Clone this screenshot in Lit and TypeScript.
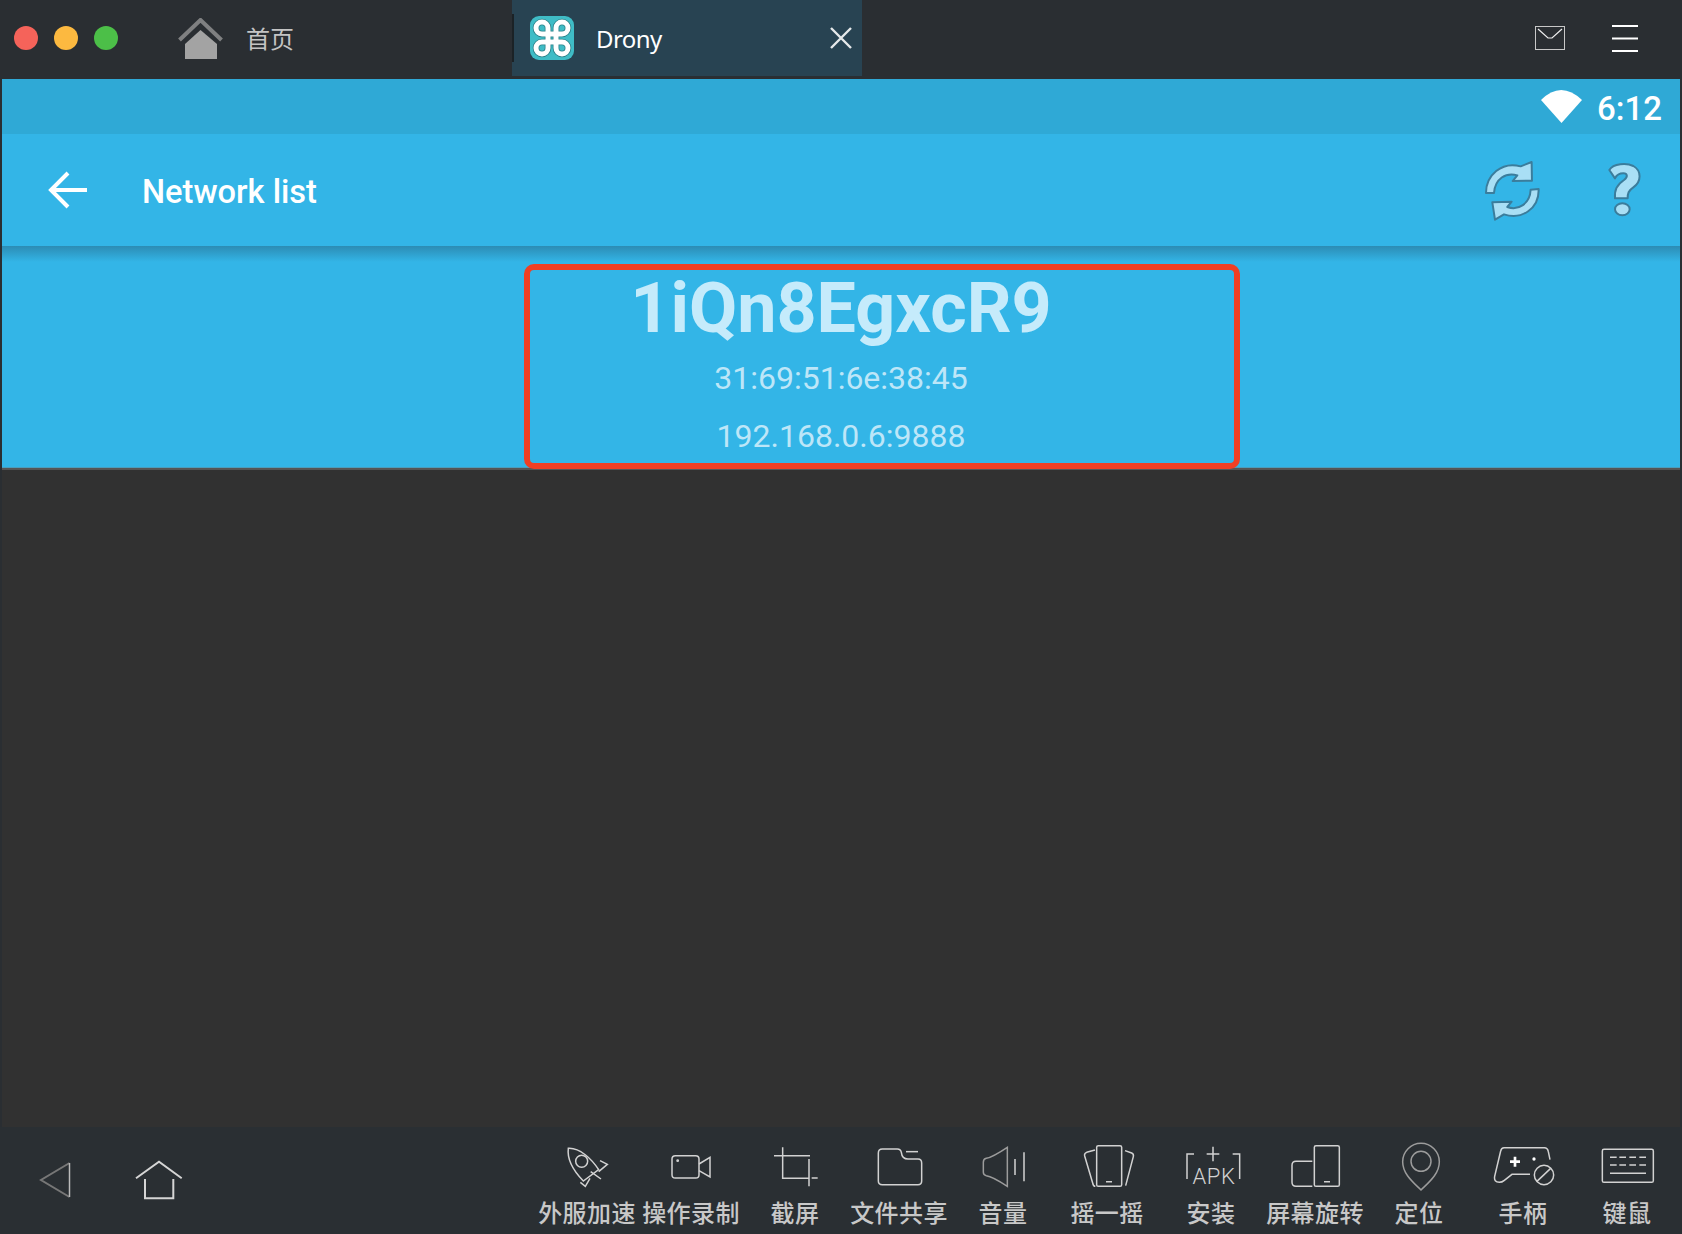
import { LitElement, html, svg, css } from 'lit';
import { customElement } from 'lit/decorators.js';

const CJK = `"Noto Sans CJK SC", "Noto Sans", sans-serif`;

// viewBoxes are 192x180 so each toolbar icon draws at 1/3 scale
const TOOLS = [
  {
    label: '外服加速',
    box: '105 24 192 180',
    icon: svg`
      <path d="M145 58 C180 56 215 90 236 122 L190 156 C165 130 140 95 145 58 Z" />
      <circle cx="185" cy="97" r="18" />
      <path d="M240 95 L262 106 L236 128 M181 160 L196 172 L210 148 M212 128 L243 150" />`,
  },
  {
    label: '操作录制',
    box: '420 24 192 180',
    icon: svg`
      <rect x="459" y="80" width="81" height="67" rx="10" />
      <path d="M540 105 L573 85 V144 L540 125" />
      <circle cx="476" cy="95" r="2" />`,
  },
  {
    label: '截屏',
    box: '729 24 192 180',
    icon: svg`
      <path d="M762 80 H870 M788 55 V148 H865 M867 90 V172 M875 147 H893" />`,
  },
  {
    label: '文件共享',
    box: '1041 24 192 180',
    icon: svg`
      <path d="M1075 72 Q1075 60 1087 60 H1132 Q1142 60 1144 70 Q1146 90 1164 90 H1194 Q1205 90 1205 102 V156 Q1205 167 1194 167 H1087 Q1075 167 1075 156 Z" />
      <path d="M1158 68 H1194" />`,
  },
  {
    label: '音量',
    box: '96 24 192 180',
    icon: svg`
      <path class="dim" d="M133 100 Q133 90 142 88 Q160 85 205 55 V172 Q160 142 142 140 Q133 138 133 130 Z" />
      <path d="M228 90 V138 M255 70 V157" />`,
  },
  {
    label: '摇一摇',
    box: '405 24 192 180',
    icon: svg`
      <rect x="470" y="50" width="75" height="122" rx="5" />
      <path d="M498 158 H516 M465 63 L440 70 Q432 73 434 81 L458 162 Q460 172 466 172 M555 65 L575 72 Q582 75 580 83 L557 170" />`,
  },
  {
    label: '安装',
    box: '717 24 192 180',
    icon: svg`
      <path d="M762 75 H741 V150 M878 75 H899 V150 M800 75 H838 M819 53 V97" />
      <text x="822" y="166" text-anchor="middle" class="apk">APK</text>`,
  },
  {
    label: '屏幕旋转',
    box: '-51 24 192 180',
    icon: svg`
      <rect x="43" y="50" width="75" height="122" rx="5" />
      <path d="M72 158 H90 M37 97 H-12 Q-24 97 -24 109 V160 Q-24 172 -12 172 H37" />`,
  },
  {
    label: '定位',
    box: '261 24 192 180',
    icon: svg`
      <path class="dim" d="M363 183 C340 160 308 135 308 98 A55 55 0 0 1 418 98 C418 135 386 160 363 183 Z" />
      <circle class="dim" cx="363" cy="97" r="30" />`,
  },
  {
    label: '手柄',
    box: '573 24 192 180',
    icon: svg`
      <path d="M750 92 L745 68 Q743 56 733 56 H612 Q604 56 602 66 L584 142 Q581 160 598 160 Q606 160 613 154 L636 136 H690" />
      <path d="M630 98 H660 M645 83 V113" class="bold" />
      <circle cx="702" cy="90" r="5" class="solid" />
      <circle cx="732" cy="138" r="29" />
      <path d="M710 158 L752 118" />`,
  },
  {
    label: '键鼠',
    box: '885 24 192 180',
    icon: svg`
      <rect x="907" y="61" width="153" height="99" rx="5" />
      <path d="M930 85 H950 M958 85 H978 M988 85 H1008 M1018 85 H1038 M930 108 H950 M958 108 H978 M988 108 H1008 M1018 108 H1038 M930 133 H1038" />`,
  },
];

@customElement('app-root')
export class AppRoot extends LitElement {
  static styles = css`
    :host {
      display: flex;
      flex-direction: column;
      height: 1234px;
      background: #2a2e32;
      font-family: Roboto, sans-serif;
      overflow: hidden;
    }
    .titlebar {
      display: flex;
      height: 79px;
      flex: none;
    }
    .home-tab {
      display: flex;
      align-items: center;
      width: 512px;
      height: 76px;
      padding-left: 14px;
      box-sizing: border-box;
    }
    .lights {
      display: flex;
      gap: 16px;
      margin-right: 60px;
    }
    .light {
      width: 24px;
      height: 24px;
      border-radius: 50%;
    }
    .home-label {
      margin: -2px 0 0 23px;
      font: 24px ${css([CJK] as unknown as TemplateStringsArray)};
      color: #c4c4c4;
    }
    .tab {
      display: flex;
      align-items: center;
      width: 350px;
      height: 76px;
      background: #284352;
    }
    .tab-sep {
      width: 2px;
      height: 48px;
      background: #1b2226;
    }
    .tab-icon {
      margin-left: 16px;
    }
    .tab-name {
      margin-left: 22px;
      font: 24px "Noto Sans", sans-serif;
      letter-spacing: -0.6px;
      color: #fff;
    }
    .tab-close {
      margin-left: auto;
      margin-right: 8px;
    }
    .win-actions {
      display: flex;
      align-items: center;
      gap: 47px;
      height: 76px;
      margin-left: auto;
      padding-right: 44px;
    }
    .android {
      flex: 1;
      display: flex;
      flex-direction: column;
      margin: 0 2px;
      background: #313131;
    }
    .status {
      flex: none;
      height: 55px;
      display: flex;
      align-items: center;
      justify-content: flex-end;
      gap: 15px;
      padding-right: 18px;
      background: #2fa9d6;
      color: #fff;
      font-size: 33px;
      font-weight: 500;
    }
    .status span {
      margin-top: 3px;
    }
    .toolbar {
      flex: none;
      height: 112px;
      display: flex;
      align-items: center;
      padding: 0 35px 0 44px;
      background: #33b5e7;
    }
    .toolbar h1 {
      margin: 4px 0 0 52px;
      font-size: 32.6px;
      font-weight: 500;
      color: #fff;
    }
    .refresh {
      margin-left: auto;
      margin-right: 62px;
    }
    .refresh path,
    .help path,
    .help ellipse {
      fill: #a9dff5;
      stroke: #3b7d9c;
      stroke-width: 6;
      stroke-linejoin: round;
    }
    .list {
      position: relative;
      flex: none;
      height: 221px;
      box-sizing: border-box;
      padding-top: 22px;
      text-align: center;
      color: #bde6f8;
      background: linear-gradient(#2c8cb4, #33b5e7 16px);
    }
    .net-name {
      margin-bottom: 1px;
      font-size: 70px;
      font-weight: 700;
      line-height: 80px;
      color: #c5ebfb;
    }
    .net-line {
      font-size: 32px;
      line-height: 58px;
    }
    .mark {
      position: absolute;
      left: 522px;
      top: 18px;
      width: 716px;
      height: 205px;
      box-sizing: border-box;
      border: 6px solid #f03f23;
      border-radius: 10px;
    }
    .divider {
      flex: none;
      height: 3px;
      background: linear-gradient(#4a9dbd 1px, #555 1px);
    }
    .navbar {
      flex: none;
      height: 107px;
      display: flex;
      padding: 0 3px 0 38px;
      background: #2a2f33;
    }
    .nav {
      display: flex;
      align-self: center;
      gap: 59px;
      margin-top: -2px;
    }
    .tools {
      display: grid;
      grid-template-columns: repeat(11, 104px);
      margin-left: auto;
      padding-top: 10px;
    }
    .tool {
      display: flex;
      flex-direction: column;
      align-items: center;
    }
    .tool svg {
      width: 64px;
      height: 60px;
      fill: none;
      stroke: #d2d2d2;
      stroke-width: 4.5;
    }
    .tool svg .dim {
      stroke: #9c9c9c;
    }
    .tool svg .apk {
      font: 300 66px Roboto, sans-serif;
      letter-spacing: 2px;
      fill: #d2d2d2;
      stroke: none;
    }
    .tool svg .bold {
      stroke: #fff;
      stroke-width: 8;
    }
    .tool svg .solid {
      fill: #fff;
      stroke: none;
    }
    .tool span {
      margin-top: -1px;
      font: 500 24px/32px ${css([CJK] as unknown as TemplateStringsArray)};
      letter-spacing: 0.4px;
      color: #c8c8c8;
      white-space: nowrap;
    }
  `;

  render() {
    return html`
      <div class="titlebar">
        <div class="home-tab">
          <div class="lights">
            <div class="light" style="background:#f5635a"></div>
            <div class="light" style="background:#fcb940"></div>
            <div class="light" style="background:#4cbf48"></div>
          </div>
          <svg width="45" height="41" viewBox="0 0 45 41">
            <path d="M1.5 22 L22.5 2 L43.5 22" fill="none" stroke="#7f8081" stroke-width="4" />
            <path d="M7 26 L22.5 12 L39 26 V41 H7 Z" fill="#a3a3a3" />
          </svg>
          <span class="home-label">首页</span>
        </div>
        <div class="tab">
          <div class="tab-sep"></div>
          <svg class="tab-icon" width="44" height="44" viewBox="0 0 44 44">
            <rect width="44" height="44" rx="9" fill="#3fbcc6" />
            <path
              d="M18 18 H12 a6 6 0 1 1 6 -6 V32 a6 6 0 1 1 -6 -6 H32 a6 6 0 1 1 -6 6 V12 a6 6 0 1 1 6 6 Z"
              fill="none" stroke="#2b8088" stroke-width="6.6"
            />
            <path
              d="M18 18 H12 a6 6 0 1 1 6 -6 V32 a6 6 0 1 1 -6 -6 H32 a6 6 0 1 1 -6 6 V12 a6 6 0 1 1 6 6 Z"
              fill="none" stroke="#fff" stroke-width="5"
            />
          </svg>
          <span class="tab-name">Drony</span>
          <svg class="tab-close" width="26" height="26" viewBox="0 0 26 26">
            <path d="M3 3 L23 23 M23 3 L3 23" stroke="#e6e9ea" stroke-width="2.4" />
          </svg>
        </div>
        <div class="win-actions">
          <svg width="30" height="24" viewBox="0 0 30 24">
            <rect x=".5" y=".5" width="29" height="23" fill="none" stroke="#c8c8c8" />
            <path d="M3 3 L13 12 H17 L27 3" fill="none" stroke="#eee" stroke-width="1.2" />
          </svg>
          <svg width="26" height="27" viewBox="0 0 26 27">
            <path d="M0 1 H26 M0 13.5 H26 M0 26 H26" stroke="#fff" stroke-width="2" />
          </svg>
        </div>
      </div>

      <div class="android">
        <div class="status">
          <svg width="41" height="33" viewBox="0 0 41 33">
            <path d="M0 10 Q20 -10 41 10 L20.5 33 Z" fill="#fff" />
          </svg>
          <span>6:12</span>
        </div>
        <div class="toolbar">
          <svg width="44" height="44" viewBox="0 0 44 44">
            <path d="M41 22 H5 M22 5 L5 22 L22 39" fill="none" stroke="#fff" stroke-width="4" />
          </svg>
          <h1>Network list</h1>
          <svg class="refresh" width="63.3" height="66.7" viewBox="240 470 190 200">
            <path d="M258 578 C258 525 305 482 362 498 L395 485 L396 541 L338 542 L352 525 C318 515 285 535 282 578 Z" />
            <path d="M416 566 C418 625 365 660 312 642 L285 658 L277 606 L335 604 L322 620 C355 632 390 610 392 568 Z" />
          </svg>
          <svg class="help" width="40" height="60" viewBox="615 480 120 180">
            <path d="M628 510 C640 490 680 488 700 498 C725 512 725 545 700 562 C685 572 683 580 683 595 L645 595 C643 570 650 555 672 540 C685 530 682 520 670 520 C658 520 650 525 645 535 Z" />
            <ellipse cx="667" cy="628" rx="22" ry="18" />
          </svg>
        </div>
        <div class="list">
          <div class="net-name">1iQn8EgxcR9</div>
          <div class="net-line">31:69:51:6e:38:45</div>
          <div class="net-line">192.168.0.6:9888</div>
          <div class="mark"></div>
        </div>
        <div class="divider"></div>
      </div>

      <div class="navbar">
        <div class="nav">
          <svg width="36" height="44" viewBox="0 0 36 44">
            <path d="M31.5 5 L3 22 L31.5 39" fill="none" stroke="#777" stroke-width="2" />
            <path d="M31.5 5 V39" fill="none" stroke="#bbb" stroke-width="1.5" />
          </svg>
          <svg width="52" height="44" viewBox="0 0 52 44">
            <path d="M3 20.3 L26 3.7 L48.7 20.3 M12 21 V40.3 H40.3 V21" fill="none" stroke="#d5d5d5" stroke-width="2" />
          </svg>
        </div>
        <div class="tools">
          ${TOOLS.map(
            (t) => html`
              <div class="tool">
                <svg viewBox=${t.box}>${t.icon}</svg>
                <span>${t.label}</span>
              </div>
            `
          )}
        </div>
      </div>
    `;
  }
}
